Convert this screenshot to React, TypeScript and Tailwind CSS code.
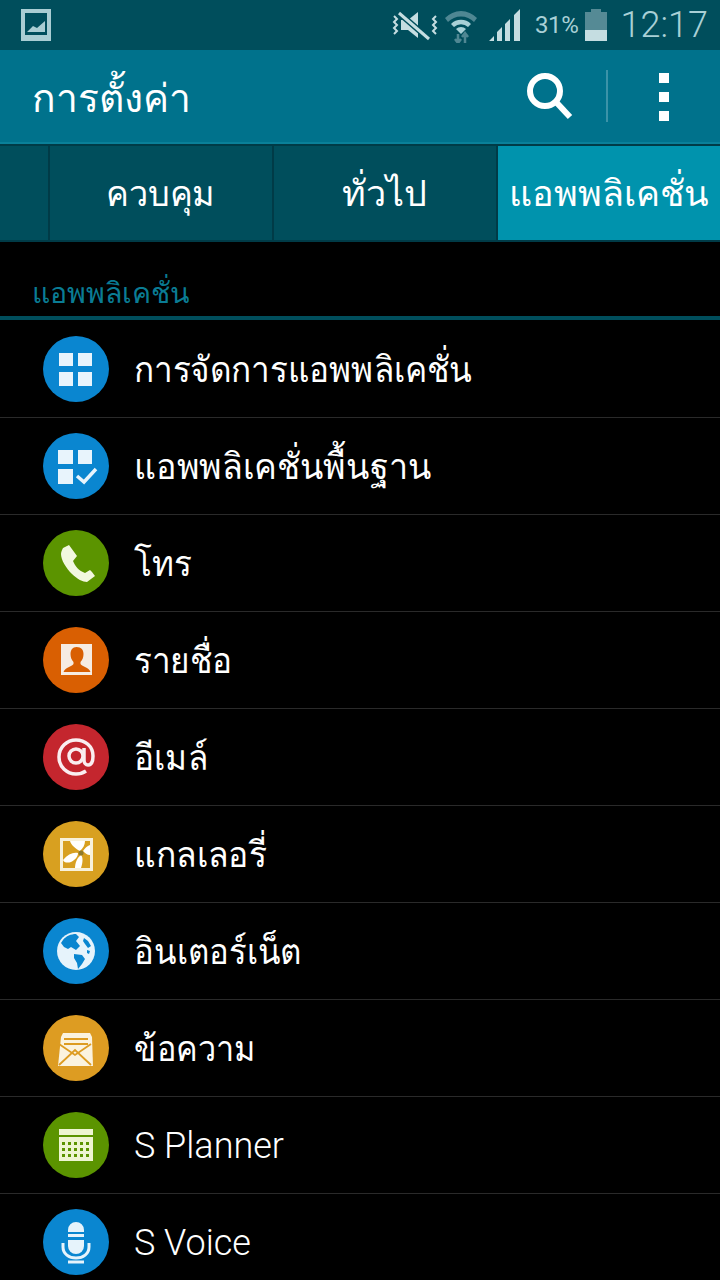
import React from 'react'

const Grid = (): JSX.Element => (
  <svg viewBox="0 0 66 66" className="w-full h-full">
    <path d="M16 17h14v13H16zM35 17h14v13H35zM16 36h14v14H16zM35 36h14v14H35z" fill="#e8f4fc" />
  </svg>
)

const GridCheck = (): JSX.Element => (
  <svg viewBox="0 0 66 66" className="w-full h-full">
    <path d="M15 17h15v14H15zM35 17h14v14H35zM15 36h15v15H15z" fill="#e8f4fc" />
    <path d="M34 43l7 6 12-13" fill="none" stroke="#e8f4fc" strokeWidth="3.5" />
  </svg>
)

const Phone = (): JSX.Element => (
  <svg viewBox="0 0 66 66" className="w-full h-full">
    <path
      d="M20 18l6-3 8 11-4 5c2 5 6 10 12 12l5-3 2 2 3 4-8 6c-4 0-10-3-15-8-6-6-11-14-11-20 0-2 1-4 2-6z"
      fill="#f2f8df"
    />
  </svg>
)

const Contact = (): JSX.Element => (
  <svg viewBox="0 0 66 66" className="w-full h-full">
    <path
      fillRule="evenodd"
      d="M18 17h31v31H18zM33.500 20c-4 0-6 3-6 7 0 3 1 6 3 8v2c-2 3-8 3-10 8h27c-2-5-8-5-10-8v-2c2-2 3-5 3-8 0-4-2-7-7-7z"
      fill="#f6ece2"
    />
  </svg>
)

const At = (): JSX.Element => (
  <svg viewBox="0 0 66 66" className="w-full h-full">
    <circle cx="33" cy="32" r="7" fill="none" stroke="#faeef0" strokeWidth="3.5" />
    <path
      d="M41 24v12c0 3 2 5 4 5 4 0 5-4 5-9 0-10-8-16-17-16s-17 7-17 17 8 17 17 17c4 0 7-1 10-3"
      fill="none"
      stroke="#faeef0"
      strokeWidth="3.5"
    />
  </svg>
)

const Gallery = (): JSX.Element => (
  <svg viewBox="0 0 66 66" className="w-full h-full">
    <path fillRule="evenodd" d="M17 17h33v33H17zM20 20v27h27V20z" fill="#f8f1da" />
    <path
      d="M37 30c-4-2-9-6-10-10h15c0 4-2 7-5 10zM35 32c-5-1-10 1-15 7 1 3 5 3 8 2 4-2 7-5 7-9zM40 30c2-3 4-5 7-6v10c-3 0-5-2-7-4zM38 34c2 2 2 7 0 13h-6c0-5 2-10 6-13z"
      fill="#fff"
    />
    <circle cx="38" cy="32" r="2.500" fill="#8f7a2c" />
  </svg>
)

const Globe = (): JSX.Element => (
  <svg viewBox="0 0 66 66" className="w-full h-full">
    <circle cx="33" cy="33" r="19" fill="#e6f3fb" />
    <path
      d="M20 22c3-4 8-6 13-6l3 3-3 4 4 5-4 4-5-3-3 2-4-2-3-4zM31 36l8 1 3 4-3 5-4 5-1-6-3-5zM41 20l4 3 3 5-3 2-3-4-2-3zM44 32l3 1-1 3-2-1z"
      fill="#0a86d0"
    />
  </svg>
)

const Mail = (): JSX.Element => (
  <svg viewBox="0 0 66 66" className="w-full h-full">
    <path d="M18 22l2-4h27l2 4 1 29H15z" fill="#fbf3df" />
    <path d="M21 24h24M21 29h24" stroke="#dd9c22" strokeWidth="1.800" />
    <path d="M16 50l16-15 16 15M16 29l16 11 16-11" fill="none" stroke="#dd9c22" strokeWidth="1.800" />
  </svg>
)

const Calendar = (): JSX.Element => (
  <svg viewBox="0 0 66 66" className="w-full h-full">
    <path d="M16 17h34v6H16z" fill="#eef5d2" />
    <path
      fillRule="evenodd"
      d="M16 25h34v24H16zM19 30v3h3v-3zM25 30v3h3v-3zM31 30v3h3v-3zM37 30v3h3v-3zM43 30v3h3v-3zM19 36v3h3v-3zM25 36v3h3v-3zM31 36v3h3v-3zM37 36v3h3v-3zM43 36v3h3v-3zM19 42v3h3v-3zM25 42v3h3v-3zM31 42v3h3v-3zM37 42v3h3v-3zM43 42v3h3v-3z"
      fill="#eef5d2"
    />
  </svg>
)

const Mic = (): JSX.Element => (
  <svg viewBox="0 0 66 66" className="w-full h-full">
    <path d="M25 21a8 8 0 0 1 16 0v2H25zM25 25h16v3H25z" fill="#e6f3fb" />
    <path d="M25 31h16v6a8 8 0 0 1-16 0z" fill="#e6f3fb" />
    <path d="M20 34v4c0 7 6 11 13 11s13-4 13-11v-4" fill="none" stroke="#e6f3fb" strokeWidth="3" />
    <path d="M25 53h16" stroke="#e6f3fb" strokeWidth="3" />
  </svg>
)

const thaiLabel = "text-[36px] text-white leading-none origin-left font-['Noto_Sans','DejaVu_Sans',sans-serif]"

const rows = [
  { label: 'การจัดการแอพพลิเคชั่น', color: 'bg-[#0a86d0]', icon: <Grid />, text: `${thaiLabel} scale-x-[0.925]` },
  { label: 'แอพพลิเคชั่นพื้นฐาน', color: 'bg-[#0a86d0]', icon: <GridCheck />, text: `${thaiLabel} scale-x-[0.947]` },
  { label: 'โทร', color: 'bg-[#5b9400]', icon: <Phone />, text: `${thaiLabel} scale-x-[0.925]` },
  { label: 'รายชื่อ', color: 'bg-[#d95f02]', icon: <Contact />, text: `${thaiLabel} scale-x-[0.925]` },
  { label: 'อีเมล์', color: 'bg-[#c4262e]', icon: <At />, text: `${thaiLabel} scale-x-[0.925]` },
  { label: 'แกลเลอรี่', color: 'bg-[#d8a020]', icon: <Gallery />, text: `${thaiLabel} scale-x-[0.935]` },
  { label: 'อินเตอร์เน็ต', color: 'bg-[#0a86d0]', icon: <Globe />, text: `${thaiLabel} scale-x-[0.915]` },
  { label: 'ข้อความ', color: 'bg-[#dd9c22]', icon: <Mail />, text: `${thaiLabel} scale-x-[0.9]` },
  {
    label: 'S Planner',
    color: 'bg-[#5b9400]',
    icon: <Calendar />,
    text: "text-[36px] text-white font-light leading-none mt-[2px] font-['Roboto',sans-serif]",
  },
  {
    label: 'S Voice',
    color: 'bg-[#0a86d0]',
    icon: <Mic />,
    text: "text-[36px] text-white font-light leading-none mt-[2px] font-['Roboto',sans-serif]",
  },
]

const StatusBar = (): JSX.Element => (
  <div className="h-[50px] bg-[#004e5c] flex items-center pl-[21px] pr-[12px] text-[#a9d0d6]">
    <svg viewBox="0 0 30 32" className="w-[30px] h-[32px]">
      <path fillRule="evenodd" d="M0 0h30v32H0zM4 4v22h22V4z" fill="#a9cdd3" />
      <path d="M6 23l6-6 4 2 8-7v11H6z" fill="#a9cdd3" />
    </svg>
    <div className="flex-1" />
    <svg viewBox="0 0 48 34" className="w-[48px] h-[34px]">
      <path d="M3 8l3 3-3 3 3 3-3 3 3 3-3 3M45 8l-3 3 3 3-3 3 3 3-3 3 3 3" fill="none" stroke="#c5dde1" strokeWidth="2" />
      <path d="M10 12h7l10-8v26L17 22h-7z" fill="#c5dde1" />
      <path d="M8 5l30 26" stroke="#004e5c" strokeWidth="6" />
      <path d="M8 5l30 26" stroke="#c5dde1" strokeWidth="3" />
    </svg>
    <svg viewBox="0 0 34 36" className="w-[34px] h-[36px] ml-[5px]">
      <path d="M1 11a22 22 0 0 1 32 0l-3 4a18 18 0 0 0-26 0z" fill="#4f8793" />
      <path d="M7 17a14 14 0 0 1 20 0l-3 3a10 10 0 0 0-14 0z" fill="#a9d0d6" />
      <path d="M12 22a7 7 0 0 1 10 0l-5 5z" fill="#a9d0d6" />
      <path d="M14 27v9M11 32l3 4 3-4M21 36v-10M18 30l3-4 3 4" fill="none" stroke="#4f8793" strokeWidth="2.500" />
    </svg>
    <svg viewBox="0 0 34 34" className="w-[34px] h-[34px] ml-[10px]">
      <path d="M1 33l5-5v5zM9 33V24l5-5v14zM17 33V16l5-5v22zM26 33V7l6-6v32z" fill="#c5dde1" />
    </svg>
    <span className="ml-[13px] text-[24px] font-['Roboto',sans-serif] tracking-[-0.3px] leading-none">31%</span>
    <div className="ml-[6px] w-[22px] h-[32px] flex flex-col items-center mt-[-1px]">
      <div className="w-[10px] h-[3px] bg-[#558a95]" />
      <div className="w-[22px] flex-1 bg-[#558a95]" />
      <div className="w-[22px] h-[11px] bg-[#c5dde1]" />
    </div>
    <span className="ml-[14px] text-[36px] font-light font-['Roboto',sans-serif] leading-none">12:17</span>
  </div>
)

const ActionBar = (): JSX.Element => (
  <div className="h-[94px] bg-[#00728c] flex items-center border-b-2 border-[#0a8099]">
    <h1 className="pl-[32px] text-[39px] leading-none text-white font-['Noto_Sans','DejaVu_Sans',sans-serif]">การตั้งค่า</h1>
    <div className="flex-1" />
    <svg viewBox="0 0 48 48" className="w-[48px] h-[48px] mr-[33px]">
      <circle cx="20" cy="19" r="15" fill="none" stroke="#fff" strokeWidth="6" />
      <path d="M31 30l14 15" stroke="#fff" strokeWidth="6" />
    </svg>
    <div className="w-[2px] h-[52px] bg-[#3b93a8]" />
    <div className="w-[112px] flex flex-col items-center gap-[9px] pt-[2px]">
      <div className="w-[10px] h-[10px] bg-white" />
      <div className="w-[10px] h-[10px] bg-white" />
      <div className="w-[10px] h-[10px] bg-white" />
    </div>
  </div>
)

const Tabs = (): JSX.Element => (
  <div className="h-[98px] bg-[#003b47] pt-[2px] pb-[2px] flex gap-[2px] text-white text-[36px] font-['Noto_Sans','DejaVu_Sans',sans-serif]">
    <div className="w-[48px] bg-[#004e5c]" />
    <div className="w-[222px] bg-[#004e5c] flex items-center justify-center pr-[2px]">
      <span className="scale-x-[0.95]">ควบคุม</span>
    </div>
    <div className="w-[222px] bg-[#004e5c] flex items-center justify-center pr-[2px]">ทั่วไป</div>
    <div className="flex-1 bg-[#0093ad] flex items-center justify-center">แอพพลิเคชั่น</div>
  </div>
)

const App = (): JSX.Element => (
  <div className="w-[720px] h-[1280px] overflow-hidden bg-black">
    <StatusBar />
    <ActionBar />
    <Tabs />
    <div className="h-[78px] pl-[32px] border-b-4 border-[#004e5c] flex items-end pb-[10px] mb-[1px]">
      <span className="text-[28.5px] leading-none text-[#0a7c94] font-['Noto_Sans','DejaVu_Sans',sans-serif]">แอพพลิเคชั่น</span>
    </div>
    {rows.map((row) => (
      <div key={row.label} className="h-[97px] flex items-center pl-[43px] gap-[25px] border-b border-[#2a2a2a]">
        <div className={`w-[66px] h-[66px] rounded-full ${row.color}`}>{row.icon}</div>
        <span className={row.text}>{row.label}</span>
      </div>
    ))}
  </div>
)

export default App
